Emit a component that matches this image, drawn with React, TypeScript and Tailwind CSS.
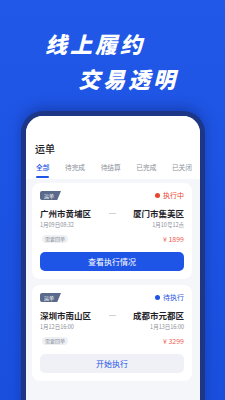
import React from "react";

type Order = {
  status: string;
  statusColor: "red" | "blue";
  from: string;
  to: string;
  fromTime: string;
  toTime: string;
  price: string;
  action: string;
  primary: boolean;
};

const orders: Order[] = [
  {
    status: "执行中",
    statusColor: "red",
    from: "广州市黄埔区",
    to: "厦门市集美区",
    fromTime: "1月09日08:32",
    toTime: "1月10号12点",
    price: "¥ 1899",
    action: "查看执行情况",
    primary: true,
  },
  {
    status: "待执行",
    statusColor: "blue",
    from: "深圳市南山区",
    to: "成都市元都区",
    fromTime: "1月12日16:00",
    toTime: "1月13日16:00",
    price: "¥ 3299",
    action: "开始执行",
    primary: false,
  },
];

function OrderCard({ o }: { o: Order }) {
  return (
    <div className="bg-white rounded-[8px] px-2 pt-2 pb-2">
      <div className="flex items-center justify-between h-[9px]">
        <div className="h-[9px] w-[21px] bg-[#5b6a8a] rounded-l-[2px] [clip-path:polygon(0_0,100%_0,82%_100%,0_100%)] flex items-center pl-[4px]">
          <span className="text-[5px] leading-none text-white">运单</span>
        </div>
        <div className="flex items-center gap-[3px]">
          <span
            className={
              o.statusColor === "red"
                ? "w-[5px] h-[5px] rounded-full bg-[#e8452e]"
                : "w-[5px] h-[5px] rounded-full bg-[#1f55e6]"
            }
          />
          <span
            className={
              o.statusColor === "red"
                ? "text-[7px] leading-none text-[#e8452e]"
                : "text-[7px] leading-none text-[#1f55e6]"
            }
          >
            {o.status}
          </span>
        </div>
      </div>
      <div className="flex items-center justify-between mt-[8px] h-[10px]">
        <span className="text-[8.5px] leading-none font-semibold text-[#1f2329]">{o.from}</span>
        <span className="w-[7px] h-[1px] bg-[#cdd1d8]" />
        <span className="text-[8.5px] leading-none font-semibold text-[#1f2329]">{o.to}</span>
      </div>
      <div className="flex items-center justify-between mt-[4px] h-[7px]">
        <span className="text-[5.5px] leading-none text-[#8a8f99]">{o.fromTime}</span>
        <span className="text-[5.5px] leading-none text-[#8a8f99]">{o.toTime}</span>
      </div>
      <div className="flex items-center justify-between mt-[6px] h-[8px]">
        <span className="ml-[2px] h-[8px] px-[3px] rounded-full bg-[#eef0f4] text-[5px] leading-[8px] text-[#8a8f99]">
          需要回单
        </span>
        <span className="text-[7px] leading-none text-[#f0604f]">{o.price}</span>
      </div>
      <div
        className={
          o.primary
            ? "mt-[9px] h-[19px] rounded-[5px] bg-[#1f55e6] flex items-center justify-center"
            : "mt-[9px] h-[19px] rounded-[5px] bg-[#eff1f6] flex items-center justify-center"
        }
      >
        <span
          className={
            o.primary
              ? "text-[8px] leading-none text-white"
              : "text-[8px] leading-none text-[#1f55e6]"
          }
        >
          {o.action}
        </span>
      </div>
    </div>
  );
}

export default function App() {
  const tabs = ["全部", "待完成", "待结算", "已完成", "已关闭"];
  return (
    <div className="w-[225px] h-[400px] overflow-hidden bg-gradient-to-b from-[#2258e8] via-[#1d53e2] to-[#1a4fde] font-['Noto_Sans_CJK_SC','Noto_Sans',sans-serif]">
      <div className="pt-[31px] text-white font-black italic">
        <div className="ml-[45px] text-[22px] leading-[24px] tracking-[3px]">线上履约</div>
        <div className="ml-[78px] mt-[11px] text-[22px] leading-[24px] tracking-[3px]">交易透明</div>
      </div>
      <div className="mt-[21px] ml-[21px] w-[184px] h-[300px] border-[5px] border-b-0 border-[#1d3686] rounded-t-[22px] bg-[#f4f6fa] overflow-hidden shadow-[0_-4px_12px_rgba(10,30,100,0.35)]">
        <div className="bg-white pt-[27px]">
          <div className="pl-[9px] text-[10px] leading-[12px] font-medium text-[#1f2329]">运单</div>
          <div className="mt-[8px] pl-[10px] pr-[8px] flex justify-between">
            {tabs.map((t, i) => (
              <div key={t} className="flex flex-col items-center">
                <span
                  className={
                    i === 0
                      ? "text-[6.7px] leading-[8px] text-[#1f55e6] font-medium"
                      : "text-[6.7px] leading-[8px] text-[#8a8f99]"
                  }
                >
                  {t}
                </span>
                <span
                  className={
                    i === 0
                      ? "mt-[5px] w-[13px] h-[2px] bg-[#1f55e6] rounded-full"
                      : "mt-[5px] w-[13px] h-[2px] bg-transparent"
                  }
                />
              </div>
            ))}
          </div>
          <div className="h-[1px]" />
        </div>
        <div className="pt-[4px] pl-[6px] pr-[8px] flex flex-col gap-[6px]">
          {orders.map((o) => (
            <OrderCard key={o.from} o={o} />
          ))}
        </div>
      </div>
    </div>
  );
}
